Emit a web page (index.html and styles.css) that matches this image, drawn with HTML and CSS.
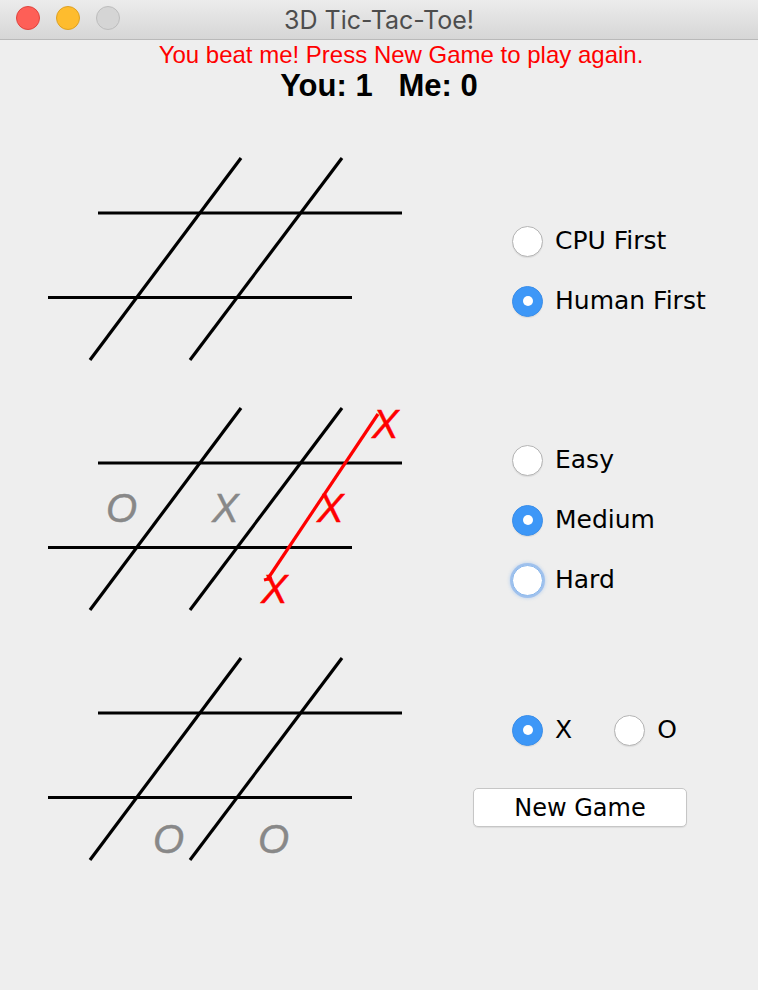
FILE: index.html
```html
<!DOCTYPE html>
<html>
<head>
<meta charset="utf-8">
<title>3D Tic-Tac-Toe!</title>
<link rel="stylesheet" href="styles.css">
</head>
<body>
<div class="window">
  <div class="titlebar">
    <div class="lights">
      <span class="light red"></span>
      <span class="light yellow"></span>
      <span class="light grey"></span>
    </div>
    <div class="title">3D Tic-Tac-Toe!</div>
  </div>
  <div class="status">You beat me! Press New Game to play again.</div>
  <div class="score">You: 1   Me: 0</div>
  <div class="main">
    <div class="boards">
      <svg class="board" width="420" height="250" viewBox="0 0 420 250">
        <g class="grid">
          <line x1="98" y1="80" x2="402" y2="80"/>
          <line x1="48" y1="164.5" x2="352" y2="164.5"/>
          <line x1="241" y1="25" x2="90" y2="227"/>
          <line x1="342" y1="25" x2="190" y2="227"/>
        </g>
      </svg>
      <svg class="board" width="420" height="250" viewBox="0 0 420 250">
        <g class="grid">
          <line x1="98" y1="80" x2="402" y2="80"/>
          <line x1="48" y1="164.5" x2="352" y2="164.5"/>
          <line x1="241" y1="25" x2="90" y2="227"/>
          <line x1="342" y1="25" x2="190" y2="227"/>
        </g>
        <text class="piece" x="106" y="139">O</text>
        <text class="piece" x="212" y="139">X</text>
        <text class="piece win" x="317" y="139">X</text>
        <text class="piece win" x="372" y="55">X</text>
        <text class="piece win" x="261" y="220">X</text>
        <line class="winline" x1="378" y1="31" x2="267" y2="197"/>
        <line class="winline" x1="264" y1="197" x2="272" y2="195"/>
      </svg>
      <svg class="board" width="420" height="250" viewBox="0 0 420 250">
        <g class="grid">
          <line x1="98" y1="80" x2="402" y2="80"/>
          <line x1="48" y1="164.5" x2="352" y2="164.5"/>
          <line x1="241" y1="25" x2="90" y2="227"/>
          <line x1="342" y1="25" x2="190" y2="227"/>
        </g>
        <text class="piece" x="153" y="220">O</text>
        <text class="piece" x="258" y="220">O</text>
      </svg>
    </div>
    <div class="controls">
      <div class="section first">
        <div class="option"><span class="radio"></span><span class="label">CPU First</span></div>
        <div class="option"><span class="radio on"></span><span class="label">Human First</span></div>
      </div>
      <div class="section level">
        <div class="option"><span class="radio"></span><span class="label">Easy</span></div>
        <div class="option"><span class="radio on"></span><span class="label">Medium</span></div>
        <div class="option"><span class="radio focus"></span><span class="label">Hard</span></div>
      </div>
      <div class="section side">
        <div class="pair">
          <div class="option"><span class="radio on"></span><span class="label">X</span></div>
          <div class="option"><span class="radio"></span><span class="label">O</span></div>
        </div>
        <button class="newgame">New Game</button>
      </div>
    </div>
  </div>
</div>
</body>
</html>
```

FILE: styles.css
```css
html, body {
  margin: 0;
  padding: 0;
  background: #eeeeee;
}
.window {
  width: 758px;
  height: 990px;
  background: #eeeeee;
  overflow: hidden;
}
.titlebar {
  height: 39px;
  border-bottom: 1px solid #b9b9b9;
  background: linear-gradient(#ececec, #d6d6d6);
  display: flex;
  align-items: center;
  position: relative;
}
.lights {
  display: flex;
  gap: 16px;
  padding-left: 16px;
  position: absolute;
  left: 0;
  top: 6px;
}
.light {
  width: 22px;
  height: 22px;
  border-radius: 50%;
  border: 1px solid rgba(0,0,0,0.12);
}
.light.red { background: #fe5f57; border-color: #e0443e; }
.light.yellow { background: #febc2e; border-color: #dea123; }
.light.grey { background: #d5d5d5; border-color: #bdbdbd; }
.title {
  flex: 1;
  text-align: center;
  font-family: Inter, "Liberation Sans", sans-serif;
  font-size: 25px;
  color: #4d4d4d;
  padding-top: 1px;
}
.status {
  height: 30px;
  line-height: 30px;
  text-align: center;
  padding-left: 44px;
  font-family: "Liberation Sans", sans-serif;
  font-size: 24px;
  color: #ff0000;
}
.score {
  height: 32px;
  line-height: 32px;
  text-align: center;
  font-family: "Liberation Sans", sans-serif;
  font-weight: bold;
  font-size: 31px;
  color: #000;
  white-space: pre;
}
.main {
  margin-top: 31px;
  display: flex;
}
.boards {
  width: 420px;
  display: flex;
  flex-direction: column;
}
.board {
  display: block;
}
.grid line {
  stroke: #000;
  stroke-width: 3.2;
}
.piece {
  font-family: "Liberation Sans", sans-serif;
  font-style: italic;
  font-size: 40px;
  fill: #888888;
  stroke: #888888;
  stroke-width: 0.4;
}
.piece.win {
  fill: #ff0000;
  stroke: #ff0000;
}
.winline {
  stroke: #ff0000;
  stroke-width: 3.2;
}
.controls {
  flex: 1;
  padding-left: 92px;
  display: flex;
  flex-direction: column;
}
.section {
  height: 250px;
  box-sizing: border-box;
  display: flex;
  flex-direction: column;
  align-items: flex-start;
  gap: 28px;
}
.section.first { padding-top: 92px; }
.section.level { padding-top: 61px; gap: 28px; }
.section.side { padding-top: 81px; gap: 42px; }
.option {
  display: flex;
  align-items: center;
  gap: 12px;
  height: 32px;
}
.pair {
  display: flex;
  gap: 42px;
}
.radio {
  width: 29px;
  height: 29px;
  border-radius: 50%;
  border: 1px solid #b4b4b4;
  background: #ffffff;
  box-shadow: 0 1px 1px rgba(0,0,0,0.08);
  position: relative;
  flex: none;
}
.radio.on {
  background: #3d97f7;
  border-color: #3a8eea;
}
.radio.on::after {
  content: "";
  position: absolute;
  width: 10px;
  height: 10px;
  border-radius: 50%;
  background: #fff;
  left: 9.5px;
  top: 9.5px;
}
.radio.focus {
  border-color: #8bb8ec;
  box-shadow: 0 0 0 2px rgba(120,170,235,0.55), 0 0 3px 3px rgba(140,185,240,0.35);
}
.label {
  font-family: "DejaVu Sans", sans-serif;
  font-size: 25px;
  color: #000;
  line-height: 32px;
}
.newgame {
  margin-left: -39px;
  width: 214px;
  height: 39px;
  background: #ffffff;
  border: 1px solid #c6c6c6;
  border-radius: 5px;
  box-shadow: 0 1px 1px rgba(0,0,0,0.08);
  font-family: "DejaVu Sans", sans-serif;
  font-size: 24px;
  color: #000;
  padding: 0;
}
```
